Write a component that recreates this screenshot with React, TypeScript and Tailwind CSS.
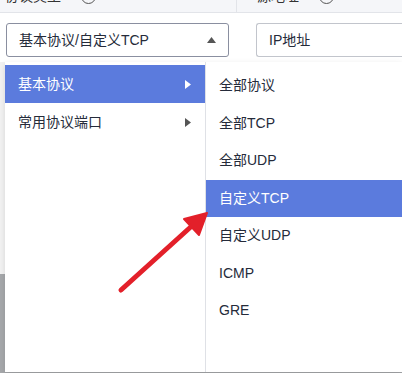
import React from 'react';

const font = { fontFamily: '"Liberation Sans", "Noto Sans CJK SC", sans-serif' };

const leftItems = ['基本协议', '常用协议端口'];
const rightItems = ['全部协议', '全部TCP', '全部UDP', '自定义TCP', '自定义UDP', 'ICMP', 'GRE'];

function Help() {
  return (
    <span className="ml-[20px] inline-flex h-[15px] w-[15px] items-center justify-center rounded-full border-[1.5px] border-[#555] text-[10px] font-bold text-[#555]">
      ?
    </span>
  );
}

export default function App() {
  return (
    <div className="relative h-[373px] w-[402px] overflow-hidden bg-white text-[#252b3a]" style={font}>
      <div className="flex h-[13px] overflow-hidden border-b border-[#e2e4e9] bg-[#f5f6f9]">
        <div className="flex w-[237px] items-end border-r border-[#e2e4e9] pl-[5px]">
          <div className="mb-[8px] flex items-center text-[14px] leading-[16px] text-[#333]">
            <span>协议类型</span>
            <Help />
          </div>
        </div>
        <div className="flex items-end pl-[18px]">
          <div className="mb-[8px] flex items-center text-[14px] leading-[16px] text-[#333]">
            <span className="ml-[2px]">源地址</span>
            <Help />
          </div>
        </div>
      </div>

      <div className="flex pt-[10px]">
        <div className="ml-[6px] flex h-[34px] w-[223px] items-center justify-between rounded-[3px] border border-[#8a8fa0] pl-[12px] pr-[12px] text-[14px]">
          <span>基本协议/自定义TCP</span>
          <svg width="9" height="6" viewBox="0 0 9 6">
            <path d="M4.5 0 L9 6 L0 6 Z" fill="#555" />
          </svg>
        </div>
        <div className="ml-[27px] flex h-[34px] flex-1 items-center rounded-l-[3px] border border-r-0 border-[#c2c5cc] pl-[12px] text-[14px]">
          IP地址
        </div>
      </div>

      <div className="absolute bottom-0 left-0 right-0 top-[274px] bg-[#a6a8ab]" />
      <div className="absolute left-0 top-[62px] h-[212px] w-[5px] bg-[#f2f2f2]" />

      <div className="absolute bottom-[1px] left-[5px] right-0 top-[62px] flex bg-white shadow-[0_2px_6px_rgba(0,0,0,0.12)]">
        <div className="w-[200px] pt-[3px]">
          {leftItems.map((item, i) => (
            <div
              key={item}
              className={`flex h-[38px] items-center justify-between pl-[13px] pr-[14px] text-[14px] ${i === 0 ? 'bg-[#5b7bdd] text-white' : ''}`}
            >
              <span>{item}</span>
              <svg width="6" height="9" viewBox="0 0 6 9">
                <path d="M0 0 L6 4.5 L0 9 Z" fill={i === 0 ? '#fff' : '#555'} />
              </svg>
            </div>
          ))}
        </div>
        <div className="flex-1 border-l border-[#dfe1e6] pt-[5px]">
          {rightItems.map((item) => (
            <div
              key={item}
              className={`flex h-[37.5px] items-center pl-[13px] text-[14px] ${item === '自定义TCP' ? 'bg-[#5b7bdd] text-white' : ''}`}
            >
              {item}
            </div>
          ))}
        </div>
      </div>

      <svg className="absolute left-0 top-0" width="402" height="373" viewBox="0 0 402 373">
        <line x1="121" y1="290" x2="194" y2="224" stroke="#e3202a" strokeWidth="5" strokeLinecap="round" />
        <path d="M207 213 L184 219 L199 235 Z" fill="#e3202a" stroke="#e3202a" strokeWidth="2" strokeLinejoin="round" />
      </svg>
    </div>
  );
}
